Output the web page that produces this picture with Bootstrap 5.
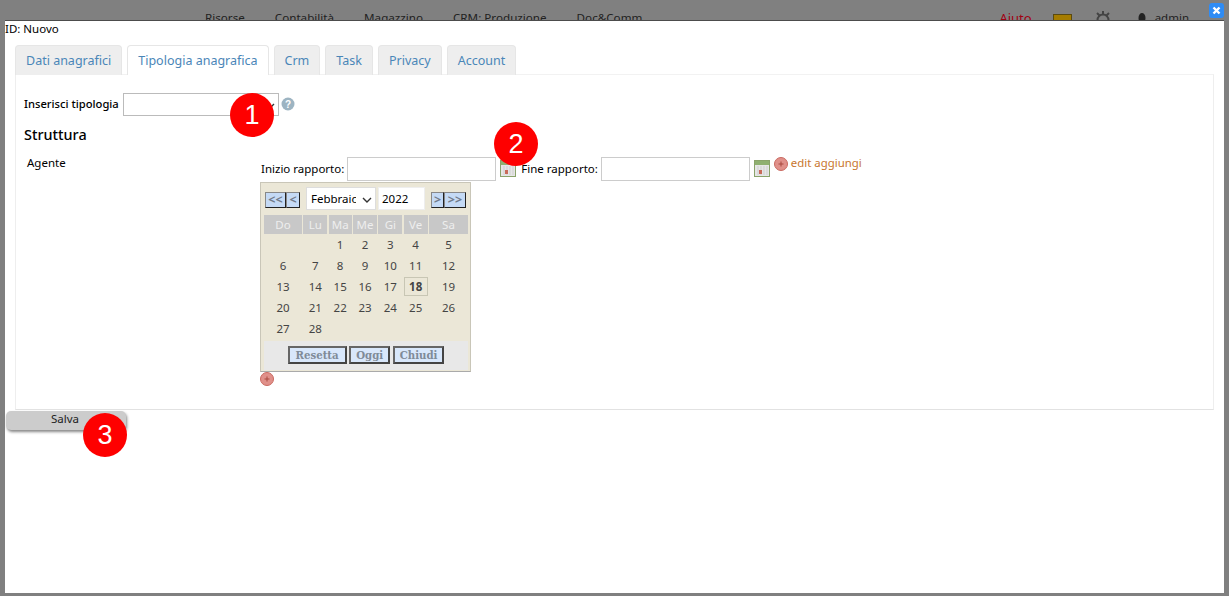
<!DOCTYPE html>
<html lang="it">
<head>
    <meta charset="UTF-8">
    <title>Anagrafica</title>
    <link href="https://cdn.jsdelivr.net/npm/bootstrap@5.3.0/dist/css/bootstrap.min.css" rel="stylesheet">
    <style>
        html, body { height: 100%; }
        body {
            background: #808080;
            font-family: "Noto Sans", "Open Sans", sans-serif;
            font-size: 11.5px;
            color: #000;
            overflow: hidden;
        }
        .page-wrap { height: 596px; padding: 0 5px 3px 5px; position: relative; }
        .bg-menu { height: 20px; overflow: hidden; color: #222; padding-top: 10px; line-height: 16px; }
        .bg-menu span { white-space: nowrap; }
        .bg-left { margin-left: 200px; gap: 30px; font-size: 11.65px; }
        .bg-right { margin-left: auto; margin-right: 35px; }
        .bg-aiuto { color: #a00012; font-size: 13px; margin-right: 21px; }
        .bg-square { margin-right: 22px; }
        .bg-gear { margin-right: 26px; }
        .bg-person { margin-right: 9px; }
        .dialog-box { height: 573px; background: #fff; border-top: 1px solid #4c4c4c; position: relative; }
        .id-line { height: 24px; line-height: 14px; padding-top: 1px; }
        .tab-strip { margin: 0 10px; gap: 5px; height: 30px; }
        .tab-item {
            height: 30px; padding: 6px 10px 0 10px; line-height: 18px; font-size: 12.5px;
            color: #4a86b8; background: #eee; border: 1px solid #e6e6e6; border-bottom: 0;
            border-radius: 4px 4px 0 0;
        }
        .tab-item.on { background: #fff; }
        .tab-body { margin: -1px 10px 0 10px; height: 336px; border: 1px solid #eee; border-top-color: #f2f2f2; border-bottom-color: #e2e2e2; padding: 18px 8px 0 8px; background: #fff; }
        .type-row { height: 23px; }
        .type-label { font-size: 11.2px; font-weight: 500; }
        .type-select {
            width: 156px; height: 23px; border: 1px solid #bbb; background: #fff; margin-left: 4px;
            position: relative;
        }
        .type-select svg { position: absolute; right: 3px; top: 9px; }
        .help-ico { margin: 0 0 2px 2px; }
        .struct-title { font-size: 14.4px; font-weight: 500; margin: 9px 0 0 0; line-height: 20px; height: 20px; }
        .struct-row { margin-top: 8px; }
        .agent-cell { width: 236px; padding: 3px 0 0 3px; line-height: 14px; }
        .dates-row { height: 24px; margin-top: 4px; padding-left: 1px; }
        .date-input { width: 149px; height: 24px; border: 1px solid #ccc; background: #fff; margin-left: 3px; }
        .cal-ico { margin: 0 5px 0 4px; position: relative; top: -1px; }
        .edit-link { color: #c8762e; font-size: 11.4px; margin-left: 3px; white-space: nowrap; position: relative; top: -6px; }
        .plus-ico { position: relative; top: -5px; margin-left: -1px; }
        .cal-box { width: 211px; height: 190px; margin-top: 1px; background: #ebe7d7; border: 1px solid #c9c6b8; border-bottom-color: #aaa; padding: 4px 2px 0 3px; }
        .cal-head { height: 26px; }
        .nav-btn {
            height: 16px; background: #c5daf5; color: #717b8a; border: 1px solid; border-color: #888 #222 #222 #888;
            font-weight: 700; font-size: 12.5px; line-height: 12px; padding: 0; text-align: center; margin-top: 5px;
        }
        .nav-w1 { width: 22px; } .nav-w2 { width: 14px; }
        .nav-first { width: 21px; margin-left: 1px; }
        .nav-w3 { width: 13px; }
        .month-sel { width: 70px; height: 23px; margin-left: 6px; background: #fff; border: 1px solid #ddd; padding: 3px 0 0 4px; line-height: 16px; font-size: 11.5px; overflow: hidden; white-space: nowrap; position: relative; }
        .month-sel svg { position: absolute; right: 3px; top: 9px; }
        .month-txt { display: block; width: 45px; overflow: hidden; }
        .year-inp { width: 47px; height: 23px; margin-left: 2px; background: #fff; border: 1px solid #eee; padding: 3px 0 0 3px; line-height: 16px; }
        .nav-right { margin-left: 6px; }
        .cal-grid { display: grid; grid-template-columns: 38px 24px 23px 24px 24px 24px 39px; column-gap: 1.33px; margin-top: 2px; }
        .cal-grid div { height: 21px; text-align: center; line-height: 21px; color: #444; font-size: 11.5px; }
        .cal-grid .dow { height: 19px; line-height: 19px; background: #c8c8c8; color: #eee; }
        .cal-grid .today { font-weight: 700; border: 1px solid #c8c6b4; height: 19px; line-height: 17px; margin-top: 1px; }
        .cal-foot { margin-top: 2px; height: 29px; background: #e8e8e8; gap: 2.5px; padding-top: 5px; width: 204px; }
        .foot-btn {
            height: 18px; font-family: "DejaVu Serif", serif; font-size: 10.2px; font-weight: 700; line-height: 14px;
            color: #7f8b98; background: #d8e7fb; border: 2px solid; border-color: #666 #444 #444 #666; padding: 0 5px;
        }
        .foot-wide { padding: 0 6px; }
        .plus-below { display: block; margin-left: 0; }
        .save-wrap { height: 22px; }
        .save-btn {
            width: 120px; height: 19px; margin-left: 1px; background: #ccc; border: 0; border-radius: 5px;
            font-size: 11.5px; line-height: 16px; color: #222; text-align: center; box-shadow: 1px 2px 3px #888; padding: 0 2px 2px 0;
        }
        .close-x { position: absolute; right: 5px; top: 3px; width: 15px; height: 15px; border-radius: 3px; background: #2f8cf5; z-index: 3; }
        .step-dot {
            position: absolute; width: 44px; height: 44px; border-radius: 50%; background: #fe0000; color: #fff;
            font-family: "Liberation Sans", Arial, sans-serif; font-size: 27px; line-height: 44px; text-align: center; z-index: 4;
        }
        .dot-a { left: 230px; top: 93px; }
        .dot-b { left: 494px; top: 122px; }
        .dot-c { left: 83px; top: 413px; }
    </style>
</head>
<body>
    <div class="page-wrap">
        <!-- menu behind the dialog -->
        <div class="bg-menu d-flex">
            <div class="bg-left d-flex">
                <span>Risorse</span><span>Contabilità</span><span>Magazzino</span><span>CRM: Produzione</span><span>Doc&amp;Comm</span>
            </div>
            <div class="bg-right d-flex align-items-start">
                <span class="bg-aiuto">Aiuto</span>
                <svg class="bg-square" width="19" height="10" viewBox="0 0 19 10"><rect x="0.5" y="4.5" width="18" height="10" fill="#a57c00" stroke="#5a4a10"/></svg>
                <svg class="bg-gear" width="18" height="10" viewBox="0 0 18 10"><circle cx="9" cy="10" r="5.5" fill="none" stroke="#444" stroke-width="2"/><path d="M9 1v4M3 3l3 3M15 3l-3 3" stroke="#444" stroke-width="2"/></svg>
                <svg class="bg-person" width="8" height="10" viewBox="0 0 8 10"><ellipse cx="4" cy="8" rx="3.5" ry="5" fill="#222"/></svg>
                <span>admin</span>
            </div>
        </div>

        <div class="dialog-box">
            <div class="id-line">ID: Nuovo</div>

            <div class="tab-strip d-flex">
                <div class="tab-item">Dati anagrafici</div>
                <div class="tab-item on">Tipologia anagrafica</div>
                <div class="tab-item">Crm</div>
                <div class="tab-item">Task</div>
                <div class="tab-item">Privacy</div>
                <div class="tab-item">Account</div>
            </div>

            <div class="tab-body">
                <div class="type-row d-flex align-items-center">
                    <span class="type-label">Inserisci tipologia</span>
                    <div class="type-select">
                        <svg width="10" height="6" viewBox="0 0 10 6"><path d="M1 1l4 4 4-4" fill="none" stroke="#333" stroke-width="1.4"/></svg>
                    </div>
                    <svg class="help-ico" width="14" height="14" viewBox="0 0 14 14"><circle cx="7" cy="7" r="6.5" fill="#9db4c2"/><text x="7" y="10.5" text-anchor="middle" font-size="10" font-weight="700" fill="#fff" font-family="Liberation Sans">?</text></svg>
                </div>

                <h2 class="struct-title">Struttura</h2>

                <div class="struct-row d-flex">
                    <div class="agent-cell">Agente</div>
                    <div>
                        <div class="dates-row d-flex align-items-center">
                            <span>Inizio rapporto:</span>
                            <div class="date-input"></div>
                            <svg class="cal-ico" width="16" height="17" viewBox="0 0 16 17"><rect x="0.5" y="0.5" width="15" height="16" fill="#e6e6e6" stroke="#8aa36a"/><rect x="1" y="1" width="14" height="4" fill="#8fb070"/><path d="M4 6v9M7 6v9M10 6v9M13 6v9" stroke="#cfcfcf"/><rect x="5" y="10" width="3" height="4" fill="#c96a5a"/></svg>
                            <span>Fine rapporto:</span>
                            <div class="date-input"></div>
                            <svg class="cal-ico" width="16" height="17" viewBox="0 0 16 17"><rect x="0.5" y="0.5" width="15" height="16" fill="#e6e6e6" stroke="#8aa36a"/><rect x="1" y="1" width="14" height="4" fill="#8fb070"/><path d="M4 6v9M7 6v9M10 6v9M13 6v9" stroke="#cfcfcf"/><rect x="5" y="10" width="3" height="4" fill="#c96a5a"/></svg>
                            <svg class="plus-ico" width="14" height="14" viewBox="0 0 14 14"><circle cx="7" cy="7" r="6.5" fill="#e0908a" stroke="#c9685f"/><path d="M4.5 7h5M7 4.5v5" stroke="#a8483f"/></svg>
                            <span class="edit-link">edit aggiungi</span>
                        </div>

                        <div class="cal-box">
                            <div class="cal-head d-flex align-items-start">
                                <button class="nav-btn nav-first">&lt;&lt;</button><button class="nav-btn nav-w2">&lt;</button>
                                <div class="month-sel"><span class="month-txt">Febbraio</span><svg width="10" height="6" viewBox="0 0 10 6"><path d="M1 1l4 4 4-4" fill="none" stroke="#333" stroke-width="1.4"/></svg></div>
                                <div class="year-inp">2022</div>
                                <button class="nav-btn nav-w3 nav-right">&gt;</button><button class="nav-btn nav-w1">&gt;&gt;</button>
                            </div>
                            <div class="cal-grid" id="calGrid"></div>
                            <div class="cal-foot d-flex justify-content-center">
                                <button class="foot-btn foot-wide">Resetta</button>
                                <button class="foot-btn">Oggi</button>
                                <button class="foot-btn">Chiudi</button>
                            </div>
                        </div>
                        <svg class="plus-below" width="14" height="14" viewBox="0 0 14 14"><circle cx="7" cy="7" r="6.5" fill="#e0908a" stroke="#c9685f"/><path d="M4.5 7h5M7 4.5v5" stroke="#a8483f"/></svg>
                    </div>
                </div>
            </div>

            <div class="save-wrap"><button class="save-btn">Salva</button></div>
        </div>

        <svg class="close-x" viewBox="0 0 15 15"><path d="M4.5 4.5l6 6M10.5 4.5l-6 6" stroke="#fff" stroke-width="2.4"/></svg>
        <div class="step-dot dot-a">1</div>
        <div class="step-dot dot-b">2</div>
        <div class="step-dot dot-c">3</div>
    </div>

    <script>
        // February 2022 starts on a Tuesday, week starts on Sunday here
        const grid = document.getElementById("calGrid");
        ["Do", "Lu", "Ma", "Me", "Gi", "Ve", "Sa"].forEach(d => {
            const c = document.createElement("div");
            c.className = "dow";
            c.textContent = d;
            grid.appendChild(c);
        });
        for (let i = 0; i < 2; i++) grid.appendChild(document.createElement("div"));
        for (let day = 1; day <= 28; day++) {
            const c = document.createElement("div");
            if (day === 18) c.className = "today";
            c.textContent = day;
            grid.appendChild(c);
        }
    </script>
    <script src="https://cdn.jsdelivr.net/npm/bootstrap@5.3.0/dist/js/bootstrap.bundle.min.js"></script>
</body>
</html>
